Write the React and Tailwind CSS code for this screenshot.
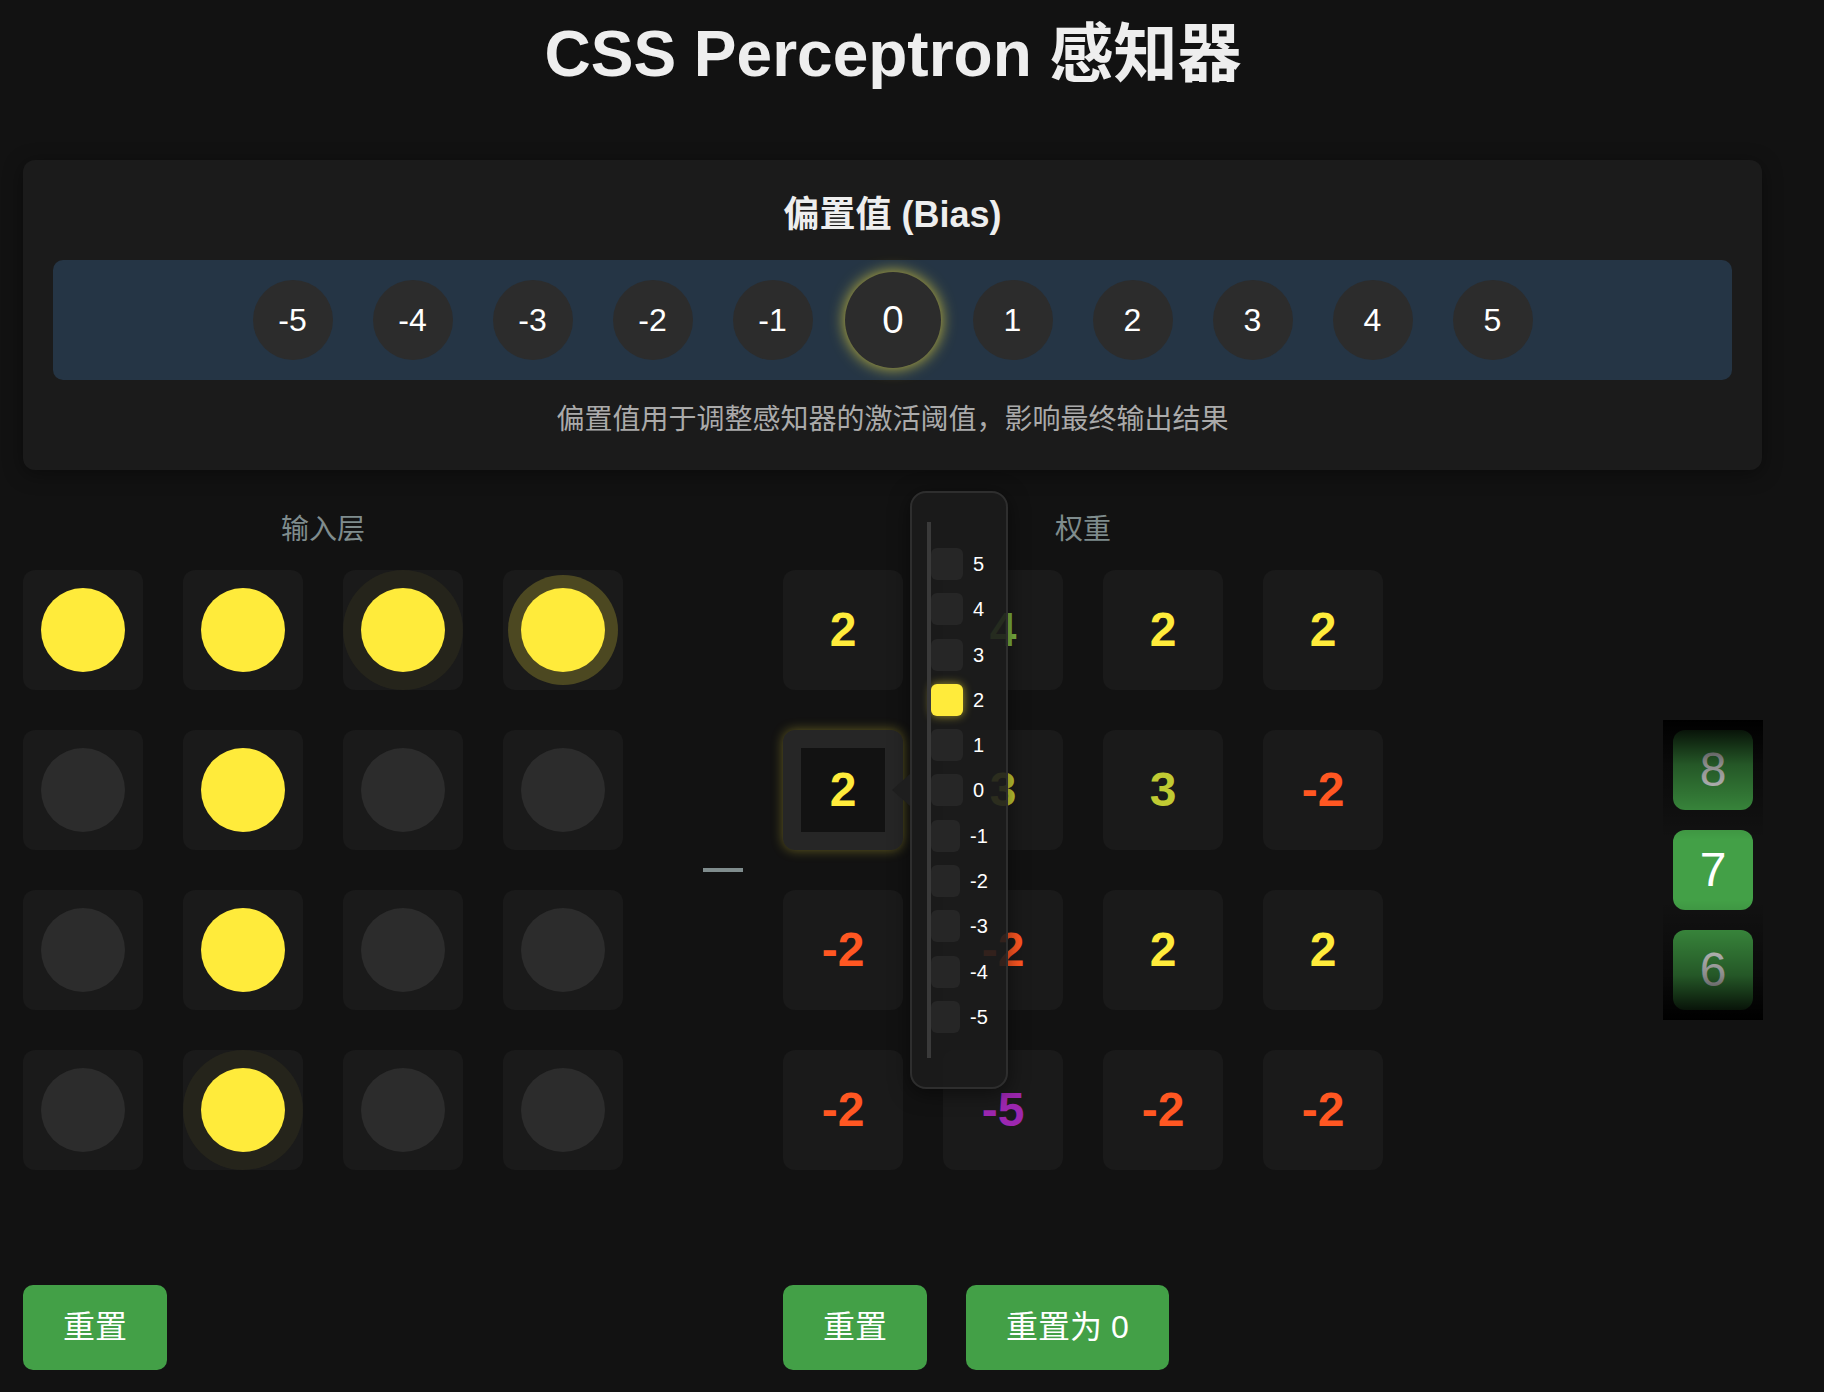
import React from 'react';

const biasValues = [-5, -4, -3, -2, -1, 0, 1, 2, 3, 4, 5];

// 1 = lit, glow: 0 none, 1 faint ripple, 2 strong ripple
const inputs = [
  [[1, 0], [1, 0], [1, 1], [1, 2]],
  [[0, 0], [1, 0], [0, 0], [0, 0]],
  [[0, 0], [1, 0], [0, 0], [0, 0]],
  [[0, 0], [1, 1], [0, 0], [0, 0]],
];

const weights = [
  [2, 4, 2, 2],
  [2, 3, 3, -2],
  [-2, -2, 2, 2],
  [-2, -5, -2, -2],
];

const weightColor = {
  5: 'text-[#4caf50]',
  4: 'text-[#7cb342]',
  3: 'text-[#c0ca33]',
  2: 'text-[#ffeb3b]',
  1: 'text-[#ffc107]',
  0: 'text-[#ff9800]',
  '-1': 'text-[#ff7043]',
  '-2': 'text-[#ff5722]',
  '-3': 'text-[#f44336]',
  '-4': 'text-[#e91e63]',
  '-5': 'text-[#9c27b0]',
};

const glowClass = {
  0: '',
  1: 'shadow-[0_0_0_18px_rgba(255,235,59,0.05)]',
  2: 'shadow-[0_0_0_13px_rgba(255,235,59,0.22)]',
};

const InputCell = ({ on, glow }) => (
  <div className="h-[120px] rounded-[12px] bg-[#1a1a1a] flex items-center justify-center">
    <div
      className={`w-[84px] h-[84px] rounded-full ${on ? 'bg-[#ffeb3b]' : 'bg-[#2c2c2c]'} ${glowClass[glow]}`}
    />
  </div>
);

const WeightCell = ({ value, selected }) => (
  <div
    className={`h-[120px] rounded-[12px] flex items-center justify-center text-[48px] font-bold leading-none ${weightColor[value]} ${
      selected
        ? 'border-[18px] border-[#262626] bg-[#121212] shadow-[0_0_12px_rgba(255,235,59,0.35)]'
        : 'bg-[#1a1a1a]'
    }`}
  >
    {value}
  </div>
);

const GreenButton = ({ children }) => (
  <button className="bg-[#43a047] text-white text-[32px] leading-[37px] px-[40px] py-[24px] rounded-[10px]">
    {children}
  </button>
);

const WeightPicker = () => (
  <div className="absolute left-[127px] top-[-19px] w-[98px] h-[598px] rounded-[16px] border-2 border-[#2e2e2e] bg-[rgba(28,28,28,0.9)] shadow-[0_4px_20px_rgba(0,0,0,0.5)] z-10">
    <div className="absolute left-[-20px] top-[281px] w-0 h-0 border-y-[16px] border-y-transparent border-r-[18px] border-r-[#1e1e1e]" />
    <div className="absolute left-[15px] top-[29px] w-[4px] h-[536px] bg-[#3a3a3a]" />
    <div className="pt-[55px] pl-[19px] flex flex-col gap-[13.3px]">
      {[5, 4, 3, 2, 1, 0, -1, -2, -3, -4, -5].map((v) => (
        <div key={v} className="flex items-center gap-[10px] h-[32px]">
          <div
            className={`h-[32px] rounded-[6px] ${v < 0 ? 'w-[29px]' : 'w-[32px]'} ${
              v === 2 ? 'bg-[#ffeb3b] shadow-[0_0_10px_rgba(255,235,59,0.6)]' : 'bg-[#262626]'
            }`}
          />
          <span className="text-[20px] leading-none text-white">{v}</span>
        </div>
      ))}
    </div>
  </div>
);

const OutputReel = () => (
  <div className="relative w-[100px] h-[300px] p-[10px] flex flex-col gap-[20px] bg-[#121212]">
    {[8, 7, 6].map((n) => (
      <div
        key={n}
        className="h-[80px] rounded-[12px] bg-[#43a047] flex items-center justify-center text-[48px] leading-none text-white"
      >
        {n}
      </div>
    ))}
    <div className="absolute inset-0 pointer-events-none bg-[linear-gradient(to_bottom,#000_0%,rgba(0,0,0,0.45)_15%,transparent_40%,transparent_60%,rgba(0,0,0,0.45)_85%,#000_100%)]" />
  </div>
);

export default function App() {
  return (
    <div className="min-h-screen bg-[#121212] text-white font-['Liberation_Sans','Noto_Sans_CJK_SC',sans-serif]">
      <div className="ml-[23px] w-[1740px] pt-[17px] pb-[22px]">
        <h1 className="text-[64px] font-bold leading-[74px] text-center text-[#eeeeee]">
          CSS Perceptron 感知器
        </h1>

        <div className="mt-[69px] w-[1739px] rounded-[12px] bg-[#1b1b1b] p-[30px] shadow-[0_4px_20px_rgba(0,0,0,0.4)]">
          <h2 className="text-[36px] font-bold leading-[50px] text-center text-[#eeeeee] mb-[20px]">
            偏置值 (Bias)
          </h2>
          <div className="h-[120px] rounded-[10px] bg-[#253545] flex items-center justify-center gap-[40px]">
            {biasValues.map((v) => (
              <div
                key={v}
                className={`w-[80px] h-[80px] rounded-full bg-[#2c2c2c] flex items-center justify-center text-[32px] leading-none text-white ${
                  v === 0 ? 'scale-[1.2] shadow-[0_0_12px_rgba(255,235,59,0.75)]' : ''
                }`}
              >
                {v}
              </div>
            ))}
          </div>
          <p className="mt-[20px] text-[28px] leading-[40px] text-center text-[#aaaaaa]">
            偏置值用于调整感知器的激活阈值，影响最终输出结果
          </p>
        </div>

        <div className="mt-[40px] flex items-start">
          <div className="w-[600px]">
            <div className="h-[40px] leading-[40px] text-[28px] text-center text-[#7f8c8d]">输入层</div>
            <div className="mt-[20px] grid grid-cols-4 gap-[40px]">
              {inputs.flat().map(([on, glow], i) => (
                <InputCell key={i} on={on} glow={glow} />
              ))}
            </div>
            <div className="mt-[115px]">
              <GreenButton>重置</GreenButton>
            </div>
          </div>

          <div className="ml-[80px] mt-[358px] w-[40px] h-[4px] bg-[#7f8c8d]" />

          <div className="relative ml-[40px] w-[600px]">
            <div className="h-[40px] leading-[40px] text-[28px] text-center text-[#7f8c8d]">权重</div>
            <div className="mt-[20px] grid grid-cols-4 gap-[40px]">
              {weights.flat().map((v, i) => (
                <WeightCell key={i} value={v} selected={i === 4} />
              ))}
            </div>
            <div className="mt-[115px] flex gap-[39px]">
              <GreenButton>重置</GreenButton>
              <GreenButton>重置为 0</GreenButton>
            </div>
            <WeightPicker />
          </div>

          <div className="ml-[280px] mt-[210px]">
            <OutputReel />
          </div>
        </div>
      </div>
    </div>
  );
}
